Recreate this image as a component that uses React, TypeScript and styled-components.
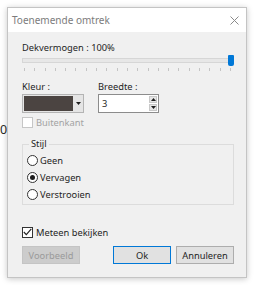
import React from 'react';
import styled, { createGlobalStyle } from 'styled-components';

const GlobalStyle = createGlobalStyle`
  html, body {
    margin: 0;
    padding: 0;
    background: #ffffff;
  }
  body {
    font-family: 'Segoe UI', 'Noto Sans', sans-serif;
    font-size: 9.3px;
    color: #1e1e1e;
  }
  * { box-sizing: border-box; }
`;

const TICKS = Array.from({ length: 21 }, (_, i) => i);

const STYLES = [
  { label: 'Geen', checked: false },
  { label: 'Vervagen', checked: true },
  { label: 'Verstrooien', checked: false },
];

function App() {
  return (
    <Page>
      <GlobalStyle />
      <StrayDigit>0</StrayDigit>
      <Window>
        <TitleBar>
          <Title>Toenemende omtrek</Title>
          <svg width="9" height="9" viewBox="0 0 9 9">
            <path d="M0.5 0.5 L8.5 8.5 M8.5 0.5 L0.5 8.5" stroke="#8a8a8a" strokeWidth="1" fill="none" />
          </svg>
        </TitleBar>
        <Body>
          <Label>Dekvermogen : 100%</Label>
          <Slider>
            <TrackArea>
              <Track />
              <Thumb />
            </TrackArea>
            <Ticks>
              {TICKS.map((t) => (
                <Tick key={t} />
              ))}
            </Ticks>
          </Slider>

          <FieldRow>
            <Field>
              <Label>Kleur :</Label>
              <ColorCombo>
                <Swatch />
                <ComboArrow>
                  <svg width="5" height="3" viewBox="0 0 5 3">
                    <path d="M0 0 H5 L2.5 3 Z" fill="#1e1e1e" />
                  </svg>
                </ComboArrow>
              </ColorCombo>
            </Field>
            <Field>
              <Label>Breedte :</Label>
              <SpinBox>
                <SpinValue>3</SpinValue>
                <SpinButtons>
                  <SpinButton>
                    <svg width="5" height="3" viewBox="0 0 5 3">
                      <path d="M0 3 H5 L2.5 0 Z" fill="#1e1e1e" />
                    </svg>
                  </SpinButton>
                  <SpinButton>
                    <svg width="5" height="3" viewBox="0 0 5 3">
                      <path d="M0 0 H5 L2.5 3 Z" fill="#1e1e1e" />
                    </svg>
                  </SpinButton>
                </SpinButtons>
              </SpinBox>
            </Field>
          </FieldRow>

          <CheckRow $disabled>
            <CheckBox $disabled />
            <span>Buitenkant</span>
          </CheckRow>

          <Group>
            <Legend>Stijl</Legend>
            {STYLES.map(({ label, checked }) => (
              <RadioRow key={label}>
                <Radio $checked={checked} />
                <span>{label}</span>
              </RadioRow>
            ))}
          </Group>

          <CheckRow $gap>
            <CheckBox>
              <svg width="9" height="8" viewBox="0 0 9 8">
                <path d="M0.8 4 L3.3 6.6 L8.3 0.8" stroke="#1e1e1e" strokeWidth="1.1" fill="none" />
              </svg>
            </CheckBox>
            <span>Meteen bekijken</span>
          </CheckRow>

          <ButtonRow>
            <Button $variant="disabled">Voorbeeld</Button>
            <Spacer />
            <Button $variant="default">Ok</Button>
            <Button>Annuleren</Button>
          </ButtonRow>
        </Body>
      </Window>
    </Page>
  );
}

export default App;

const Page = styled.div`
  position: relative;
  width: 254px;
  height: 285px;
  padding: 7px 0 0 7px;
  overflow: hidden;
`;

const StrayDigit = styled.span`
  position: absolute;
  left: 0;
  top: 122px;
  font-size: 12.5px;
  line-height: 16px;
  color: #2a2a2a;
`;

const Window = styled.div`
  position: relative;
  width: 240px;
  height: 271px;
  border: 1px solid #c4c4c4;
  box-shadow: 0 1px 6px rgba(0, 0, 0, 0.22);
  display: flex;
  flex-direction: column;
  background: #f0f0f0;
`;

const TitleBar = styled.div`
  height: 24px;
  background: #ffffff;
  display: flex;
  align-items: center;
  justify-content: space-between;
  padding: 0 7px 0 4px;
`;

const Title = styled.span`
  color: #7c7c7c;
  font-size: 10px;
`;

const Body = styled.div`
  flex: 1;
  display: flex;
  flex-direction: column;
  padding: 9px 12px 0 14px;
`;

const Label = styled.div`
  line-height: 14px;
  height: 14px;
`;

const Slider = styled.div`
  display: flex;
  flex-direction: column;
`;

const TrackArea = styled.div`
  position: relative;
  height: 11px;
`;

const Track = styled.div`
  position: absolute;
  left: 0;
  right: 1px;
  top: 3px;
  height: 5px;
  background: #e7e7e7;
  border: 1px solid #d6d6d6;
`;

const Thumb = styled.div`
  position: absolute;
  right: 0;
  top: 0;
  width: 6px;
  height: 11px;
  background: #0078d7;
  border-radius: 1px 1px 2px 2px;
`;

const Ticks = styled.div`
  display: flex;
  justify-content: space-between;
  padding: 0 3px 0 2px;
  margin-top: 2px;
`;

const Tick = styled.span`
  width: 1px;
  height: 3px;
  background: #c4c4c4;
`;

const FieldRow = styled.div`
  display: flex;
  gap: 14px;
  margin-top: 9px;
`;

const Field = styled.div`
  display: flex;
  flex-direction: column;
`;

const ColorCombo = styled.div`
  width: 62px;
  height: 19px;
  border: 1px solid #b4b4b4;
  background: #e5e5e5;
  display: flex;
  padding: 1px 0 1px 1px;
`;

const Swatch = styled.div`
  flex: 1;
  background: #4b4441;
`;

const ComboArrow = styled.div`
  width: 10px;
  display: flex;
  align-items: center;
  justify-content: center;
`;

const SpinBox = styled.div`
  width: 61px;
  height: 19px;
  border: 1px solid #8c8c8c;
  background: #ffffff;
  display: flex;
  align-items: center;
  padding: 1px;
`;

const SpinValue = styled.span`
  flex: 1;
  padding-left: 2px;
`;

const SpinButtons = styled.div`
  width: 8px;
  height: 100%;
  display: flex;
  flex-direction: column;
  gap: 1px;
`;

const SpinButton = styled.div`
  flex: 1;
  background: #e6e6e6;
  border: 1px solid #c8c8c8;
  display: flex;
  align-items: center;
  justify-content: center;
`;

const CheckRow = styled.div<{ $disabled?: boolean; $gap?: boolean }>`
  display: flex;
  align-items: center;
  gap: 3px;
  height: 14px;
  margin-top: ${(p) => (p.$gap ? '20px' : '2px')};
  color: ${(p) => (p.$disabled ? '#a3a3a3' : '#1e1e1e')};
`;

const CheckBox = styled.span<{ $disabled?: boolean }>`
  width: 11px;
  height: 11px;
  border: 1px solid ${(p) => (p.$disabled ? '#c6c6c6' : '#333333')};
  background: #ffffff;
  display: flex;
  align-items: center;
  justify-content: center;
`;

const Group = styled.fieldset`
  margin: 9px 0 0 0;
  padding: 2px 4px 1px 4px;
  border: 1px solid #dcdcdc;
  min-width: 0;
`;

const Legend = styled.legend`
  padding: 0 2px;
  margin-left: 2px;
  line-height: 12px;
`;

const RadioRow = styled.div`
  display: flex;
  align-items: center;
  gap: 2px;
  height: 17px;
`;

const Radio = styled.span<{ $checked?: boolean }>`
  width: 11px;
  height: 11px;
  border-radius: 50%;
  border: 1px solid #333333;
  background: #ffffff;
  display: flex;
  align-items: center;
  justify-content: center;
  &::after {
    content: '';
    width: 5px;
    height: 5px;
    border-radius: 50%;
    background: ${(p) => (p.$checked ? '#1e1e1e' : 'transparent')};
  }
`;

const ButtonRow = styled.div`
  display: flex;
  gap: 5px;
  margin-top: 7px;
`;

const Spacer = styled.div`
  flex: 1;
`;

const Button = styled.div<{ $variant?: 'default' | 'disabled' }>`
  width: 58px;
  height: 18px;
  display: flex;
  align-items: center;
  justify-content: center;
  background: ${(p) => (p.$variant === 'disabled' ? '#cccccc' : '#e1e1e1')};
  border: 1px solid
    ${(p) => (p.$variant === 'default' ? '#0078d7' : p.$variant === 'disabled' ? '#c4c4c4' : '#adadad')};
  color: ${(p) => (p.$variant === 'disabled' ? '#9a9a9a' : '#1e1e1e')};
`;
